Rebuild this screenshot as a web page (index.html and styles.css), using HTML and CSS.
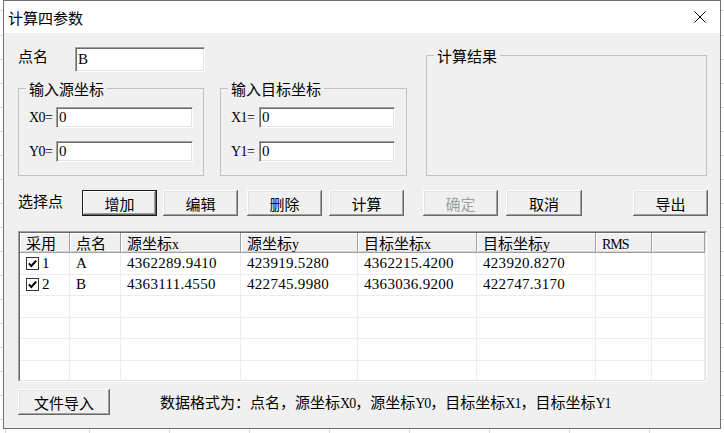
FILE: index.html
```html
<!DOCTYPE html>
<html lang="zh-CN">
<head>
<meta charset="utf-8">
<title>计算四参数</title>
<link rel="stylesheet" href="styles.css">
</head>
<body>
<div class="win">
  <div class="titlebar">
    <span class="title">计算四参数</span>
    <span class="close"><svg width="12" height="12" viewBox="0 0 12 12"><path d="M0.5 0.5L11.5 11.5M11.5 0.5L0.5 11.5" stroke="#000" stroke-width="1" fill="none"/></svg></span>
  </div>
  <div class="client">
    <div class="top">
      <div class="leftcol">
        <div class="namerow">
          <label class="lbl name-lbl">点名</label>
          <input class="edit name-edit" type="text" value="B">
        </div>
        <div class="groups">
          <fieldset class="grp grp-src">
            <legend>输入源坐标</legend>
            <div class="frow"><span class="flbl">X0=</span><input class="edit coord-edit" type="text" value="0"></div>
            <div class="frow"><span class="flbl">Y0=</span><input class="edit coord-edit" type="text" value="0"></div>
          </fieldset>
          <fieldset class="grp grp-dst">
            <legend>输入目标坐标</legend>
            <div class="frow"><span class="flbl">X1=</span><input class="edit coord-edit" type="text" value="0"></div>
            <div class="frow"><span class="flbl">Y1=</span><input class="edit coord-edit" type="text" value="0"></div>
          </fieldset>
        </div>
      </div>
      <fieldset class="grp grp-res">
        <legend>计算结果</legend>
      </fieldset>
    </div>

    <div class="btnrow">
      <span class="lbl sel-lbl">选择点</span>
      <button class="btn btn-default">增加</button>
      <button class="btn b-edit">编辑</button>
      <button class="btn b-del">删除</button>
      <button class="btn b-calc">计算</button>
      <button class="btn b-ok" disabled>确定</button>
      <button class="btn b-cancel">取消</button>
      <button class="btn b-export">导出</button>
    </div>

    <div class="list">
      <div class="list-in">
        <div class="lrow lhead">
          <div class="hcell">采用</div>
          <div class="hcell">点名</div>
          <div class="hcell">源坐标<span class="lat">x</span></div>
          <div class="hcell">源坐标<span class="lat">y</span></div>
          <div class="hcell">目标坐标<span class="lat">x</span></div>
          <div class="hcell">目标坐标<span class="lat">y</span></div>
          <div class="hcell"><span class="lat tight">RMS</span></div>
          <div class="hcell"></div>
        </div>
        <div class="lrow">
          <div class="cell chk"><svg width="13" height="13" viewBox="0 0 13 13"><rect x="0.5" y="0.5" width="12" height="12" fill="#fff" stroke="#333"/><path d="M2.8 6.4L5.3 9L10.2 3.6" fill="none" stroke="#000" stroke-width="2"/></svg><span>1</span></div>
          <div class="cell">A</div>
          <div class="cell">4362289.9410</div>
          <div class="cell">423919.5280</div>
          <div class="cell">4362215.4200</div>
          <div class="cell">423920.8270</div>
          <div class="cell"></div>
          <div class="cell"></div>
        </div>
        <div class="lrow">
          <div class="cell chk"><svg width="13" height="13" viewBox="0 0 13 13"><rect x="0.5" y="0.5" width="12" height="12" fill="#fff" stroke="#333"/><path d="M2.8 6.4L5.3 9L10.2 3.6" fill="none" stroke="#000" stroke-width="2"/></svg><span>2</span></div>
          <div class="cell">B</div>
          <div class="cell">4363111.4550</div>
          <div class="cell">422745.9980</div>
          <div class="cell">4363036.9200</div>
          <div class="cell">422747.3170</div>
          <div class="cell"></div>
          <div class="cell"></div>
        </div>
        <div class="lrow"><div class="cell"></div><div class="cell"></div><div class="cell"></div><div class="cell"></div><div class="cell"></div><div class="cell"></div><div class="cell"></div><div class="cell"></div></div>
        <div class="lrow"><div class="cell"></div><div class="cell"></div><div class="cell"></div><div class="cell"></div><div class="cell"></div><div class="cell"></div><div class="cell"></div><div class="cell"></div></div>
        <div class="lrow"><div class="cell"></div><div class="cell"></div><div class="cell"></div><div class="cell"></div><div class="cell"></div><div class="cell"></div><div class="cell"></div><div class="cell"></div></div>
        <div class="lrow"><div class="cell"></div><div class="cell"></div><div class="cell"></div><div class="cell"></div><div class="cell"></div><div class="cell"></div><div class="cell"></div><div class="cell"></div></div>
      </div>
    </div>

    <div class="bottom">
      <button class="btn import">文件导入</button>
      <span class="fmt">数据格式为：点名，源坐标<span class="lat tight">X0</span>，源坐标<span class="lat tight">Y0</span>，目标坐标<span class="lat tight">X1</span>，目标坐标<span class="lat tight">Y1</span></span>
    </div>
  </div>
</div>
</body>
</html>
```

FILE: styles.css
```css
* { box-sizing: border-box; }

body {
  margin: 0;
  width: 724px;
  height: 433px;
  overflow: hidden;
  background-color: #fff;
  background-image:
    repeating-linear-gradient(to right, transparent 0 79px, #d9d9d9 79px 80px),
    repeating-linear-gradient(to bottom, transparent 0 23px, #d9d9d9 23px 24px);
  background-position: 10px 0, 0 12px;
  font-family: "Noto Sans CJK SC", sans-serif;
  font-size: 15px;
  color: #000;
}

.win {
  margin-left: 3px;
  width: 718px;
  height: 429px;
  border: 1px solid #707070;
  background: #f0f0f0;
  display: flex;
  flex-direction: column;
}

.titlebar {
  flex: none;
  height: 32px;
  background: #fff;
  display: flex;
  align-items: center;
  padding-left: 4px;
}

.title { line-height: 17px; }

.close {
  margin-left: auto;
  width: 40px;
  height: 32px;
  display: flex;
  align-items: center;
  justify-content: center;
}
.close svg { display: block; }

.client {
  flex: 1;
  padding: 14px 0 0 14px;
}

.top { display: flex; align-items: flex-start; }

.leftcol { width: 389px; flex: none; }

.namerow { display: flex; align-items: flex-start; }

.lbl { line-height: 17px; }
.name-lbl { width: 57px; flex: none; }

.edit {
  margin: 0;
  border: 1px solid;
  border-color: #a0a0a0 #fff #fff #a0a0a0;
  box-shadow: inset 1px 1px 0 #696969, inset -1px -1px 0 #e3e3e3;
  background: #fff;
  font-family: "Liberation Serif", serif;
  font-size: 15px;
  color: #000;
  padding: 0 0 0 2px;
  outline: none;
}

.name-edit { width: 130px; height: 25px; }

.groups { display: flex; margin-top: 8px; }

.grp {
  margin: 0;
  min-width: 0;
  border: 1px solid #c2c2c2;
  padding: 10px 9px 13px 10px;
}
.grp legend {
  padding: 0 3px;
  margin-left: -3px;
  line-height: 17px;
  font-size: 15px;
}

.grp-src { width: 186px; flex: none; }
.grp-dst { width: 187px; flex: none; margin-left: 16px; }
.grp-res { width: 281px; height: 129px; flex: none; margin-left: 19px; }

.frow { display: flex; align-items: center; }
.frow + .frow { margin-top: 13px; }

.flbl {
  width: 27px;
  flex: none;
  font-family: "Liberation Serif", serif;
  font-size: 14px;
  letter-spacing: -0.6px;
  white-space: nowrap;
}
.grp-dst .flbl { width: 28px; }

.coord-edit { width: 137px; height: 21px; }
.grp-dst .coord-edit { width: 136px; }

.btnrow {
  display: flex;
  align-items: flex-start;
  margin-top: 14px;
  height: 26px;
}
.sel-lbl { width: 64px; flex: none; margin-top: 2px; }

.btn {
  flex: none;
  width: 75px;
  height: 26px;
  margin: 0;
  padding: 0;
  border: 0;
  background: #f0f0f0;
  font-family: "Noto Sans CJK SC", sans-serif;
  font-size: 15px;
  line-height: 17px;
  color: #000;
  box-shadow:
    inset -1px -1px 0 #696969,
    inset 1px 1px 0 #fff,
    inset -2px -2px 0 #a0a0a0,
    inset 2px 2px 0 #e3e3e3;
}
.btn-default {
  box-shadow:
    inset 0 0 0 1px #1a1a1a,
    inset -2px -2px 0 #696969,
    inset 2px 2px 0 #fff,
    inset -3px -3px 0 #a0a0a0;
}
.btn:disabled { color: #a0a0a0; }

.b-edit { margin-left: 6px; }
.b-del { margin-left: 9px; }
.b-calc { margin-left: 7px; }
.b-ok { margin-left: 19px; }
.b-cancel { margin-left: 8px; width: 76px; }
.b-export { margin-left: 51px; }

.list {
  margin-top: 15px;
  width: 689px;
  height: 151px;
  border: 1px solid;
  border-color: #a0a0a0 #fff #fff #a0a0a0;
}
.list-in {
  height: 100%;
  border: 1px solid;
  border-color: #696969 #e3e3e3 #e3e3e3 #696969;
  background: #fff;
  overflow: hidden;
}

.lrow {
  display: grid;
  grid-template-columns: 50px 51px 120px 117px 119px 119px 56px 53px;
  grid-template-rows: minmax(0, 1fr);
  height: 21.5px;
}
.lhead { height: 20px; background: #f0f0f0; }

.hcell {
  border-right: 1px solid #a0a0a0;
  border-bottom: 1px solid #a0a0a0;
  box-shadow: inset 1px 1px 0 #fff, inset 0 -1px 0 #d4d4d4;
  padding-left: 6px;
  line-height: 19px;
  white-space: nowrap;
  overflow: hidden;
}

.cell {
  border-right: 1px solid #ececec;
  border-bottom: 1px solid #ececec;
  padding-left: 6px;
  display: flex;
  align-items: center;
  font-family: "Liberation Serif", serif;
  font-size: 15px;
  line-height: 1;
  letter-spacing: 0.3px;
  white-space: nowrap;
}
.cell.chk { gap: 3px; }
.cell svg { display: block; flex: none; }

.lat {
  font-family: "Liberation Serif", serif;
  font-size: 14px;
  line-height: 1;
}
.lat.tight { letter-spacing: -1px; }

.bottom {
  display: flex;
  align-items: center;
  margin-top: 7px;
}
.import { width: 92px; }
.fmt { margin-left: 50px; line-height: 17px; }
```
